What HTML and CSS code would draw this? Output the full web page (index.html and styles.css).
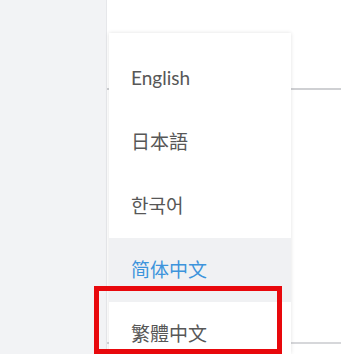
FILE: index.html
```html
<!DOCTYPE html>
<html lang="en">
<head>
<meta charset="UTF-8">
<meta name="viewport" content="width=device-width, initial-scale=1.0">
<title>Language</title>
<link rel="stylesheet" href="styles.css">
</head>
<body>
<div class="page">
    <div class="side"></div>
    <div class="main">
        <div class="block top"></div>
        <div class="block mid"></div>
        <div class="block"></div>
    </div>
</div>

<ul class="menu">
    <li>English</li>
    <li>日本語</li>
    <li lang="ko">한국어</li>
    <li class="active">简体中文</li>
    <li lang="zh-TW">繁體中文</li>
</ul>

<div class="mark"></div>
</body>
</html>
```
FILE: styles.css
```css
body{
    margin: 0;
    font-family: Lato, "Noto Sans CJK SC", sans-serif;
    background-color: #ffffff;
    overflow: hidden;
}
.page{
    display: flex;
    height: 354px;
}
.side{
    width: 106px;
    background-color: #f2f3f5;
    flex-shrink: 0;
}
.main{
    flex: 1;
    display: flex;
    flex-direction: column;
    border-left: 1px solid #e6e7ea;
}
.block{
    background-color: #fff;
}
.top{
    height: 88px;
    border-bottom: 2px solid #cfd0d3;
}
.mid{
    height: 252px;
    border-bottom: 2px solid #d6d7da;
}
.menu{
    position: absolute;
    left: 109px;
    top: 33px;
    width: 182px;
    height: 321px;
    margin: 0;
    padding: 13px 0 0;
    box-sizing: border-box;
    list-style: none;
    background-color: #fff;
    box-shadow: 0 0 4px rgba(0, 0, 0, 0.12);
    overflow: hidden;
}
.menu li{
    height: 64px;
    line-height: 64px;
    padding-left: 22px;
    font-size: 19px;
    color: #575757;
}
.menu li.active{
    background-color: #f0f1f3;
    color: #3d94dc;
}
.mark{
    position: absolute;
    left: 94px;
    top: 286px;
    width: 178px;
    height: 58px;
    border: 5px solid #e8080c;
}
```
